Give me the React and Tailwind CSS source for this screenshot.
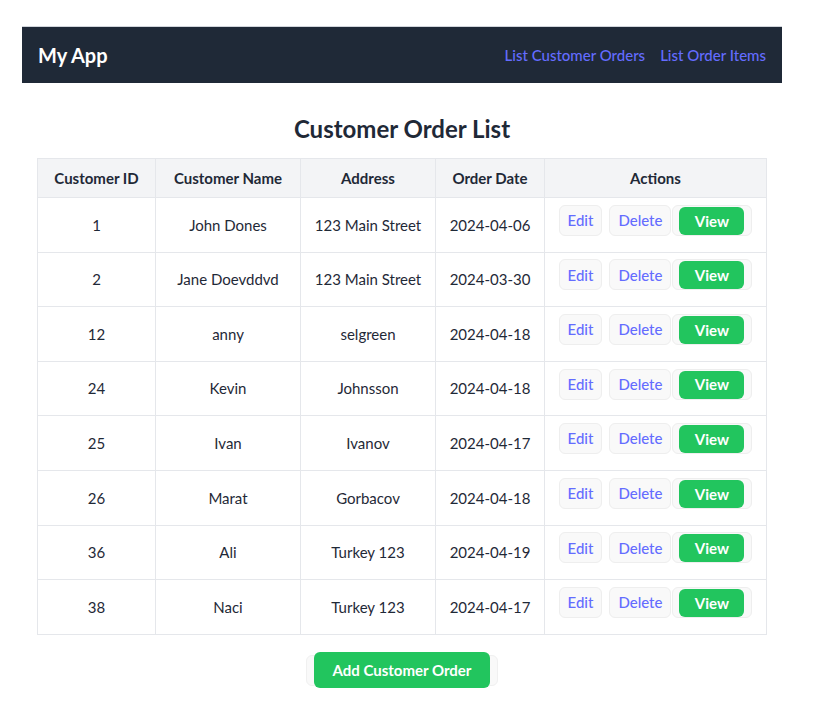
import React from "react";

const orders = [
  { id: 1, name: "John Dones", address: "123 Main Street", date: "2024-04-06" },
  { id: 2, name: "Jane Doevddvd", address: "123 Main Street", date: "2024-03-30" },
  { id: 12, name: "anny", address: "selgreen", date: "2024-04-18" },
  { id: 24, name: "Kevin", address: "Johnsson", date: "2024-04-18" },
  { id: 25, name: "Ivan", address: "Ivanov", date: "2024-04-17" },
  { id: 26, name: "Marat", address: "Gorbacov", date: "2024-04-18" },
  { id: 36, name: "Ali", address: "Turkey 123", date: "2024-04-19" },
  { id: 38, name: "Naci", address: "Turkey 123", date: "2024-04-17" },
];

const App = () => {
  return (
    <div
      className="min-h-screen bg-white text-[#1f2937]"
      style={{ fontFamily: "Lato, 'Noto Sans', sans-serif" }}
    >
      <div className="ml-[22px] w-[760px] pt-[26px]">
        <nav className="flex h-[57px] items-center justify-between border-t border-t-[#d1d5db] bg-[#1f2937] px-4">
          <span className="text-xl font-bold text-white">My App</span>
          <div className="flex gap-[15px] text-[15px] font-medium text-[#646cff]">
            <a href="#">List Customer Orders</a>
            <a href="#">List Order Items</a>
          </div>
        </nav>

        <div className="px-[15px]">
          <h2 className="mt-[30px] mb-[13px] text-center text-2xl leading-8 font-bold">
            Customer Order List
          </h2>

          <table className="w-[730px] table-fixed border-collapse text-center text-[15px]">
            <thead>
              <tr className="h-[39px] bg-[#f3f4f6] font-bold">
                <th className="w-[118px] border border-[#e5e7eb]">Customer ID</th>
                <th className="w-[145px] border border-[#e5e7eb]">Customer Name</th>
                <th className="w-[135px] border border-[#e5e7eb]">Address</th>
                <th className="w-[109px] border border-[#e5e7eb]">Order Date</th>
                <th className="w-[222px] border border-[#e5e7eb]">Actions</th>
              </tr>
            </thead>
            <tbody>
              {orders.map((o) => (
                <tr key={o.id} className="h-[54.6px]">
                  <td className="border border-[#e5e7eb]">{o.id}</td>
                  <td className="border border-[#e5e7eb]">{o.name}</td>
                  <td className="border border-[#e5e7eb]">{o.address}</td>
                  <td className="border border-[#e5e7eb]">{o.date}</td>
                  <td className="border border-[#e5e7eb]">
                    <div className="flex items-center justify-center pb-[10px] pt-[1px]">
                      <button className="h-[31px] rounded-md border border-[#eeeeee] bg-[#f9f9f9] px-2 font-medium text-[#646cff]">
                        Edit
                      </button>
                      <button className="ml-[7px] h-[31px] rounded-md border border-[#eeeeee] bg-[#f9f9f9] px-2 font-medium text-[#646cff]">
                        Delete
                      </button>
                      <div className="ml-px flex h-[31px] items-start rounded-md border border-[#eeeeee] bg-[#f9f9f9] pt-px pr-[7px] pl-[6px]">
                        <span className="flex h-[28px] w-[65px] items-center justify-center rounded-md bg-[#22c55e] font-bold text-white">
                          View
                        </span>
                      </div>
                    </div>
                  </td>
                </tr>
              ))}
            </tbody>
          </table>

          <div className="mt-5 flex justify-center">
            <div className="flex h-[31px] items-center rounded-md border border-[#f0f0f0] bg-[#f9f9f9] px-[7px]">
              <span className="-my-[3px] flex h-[36px] w-[176px] items-center justify-center rounded-md bg-[#22c55e] text-[15px] font-bold text-white">
                Add Customer Order
              </span>
            </div>
          </div>
        </div>
      </div>
    </div>
  );
};

export default App;
